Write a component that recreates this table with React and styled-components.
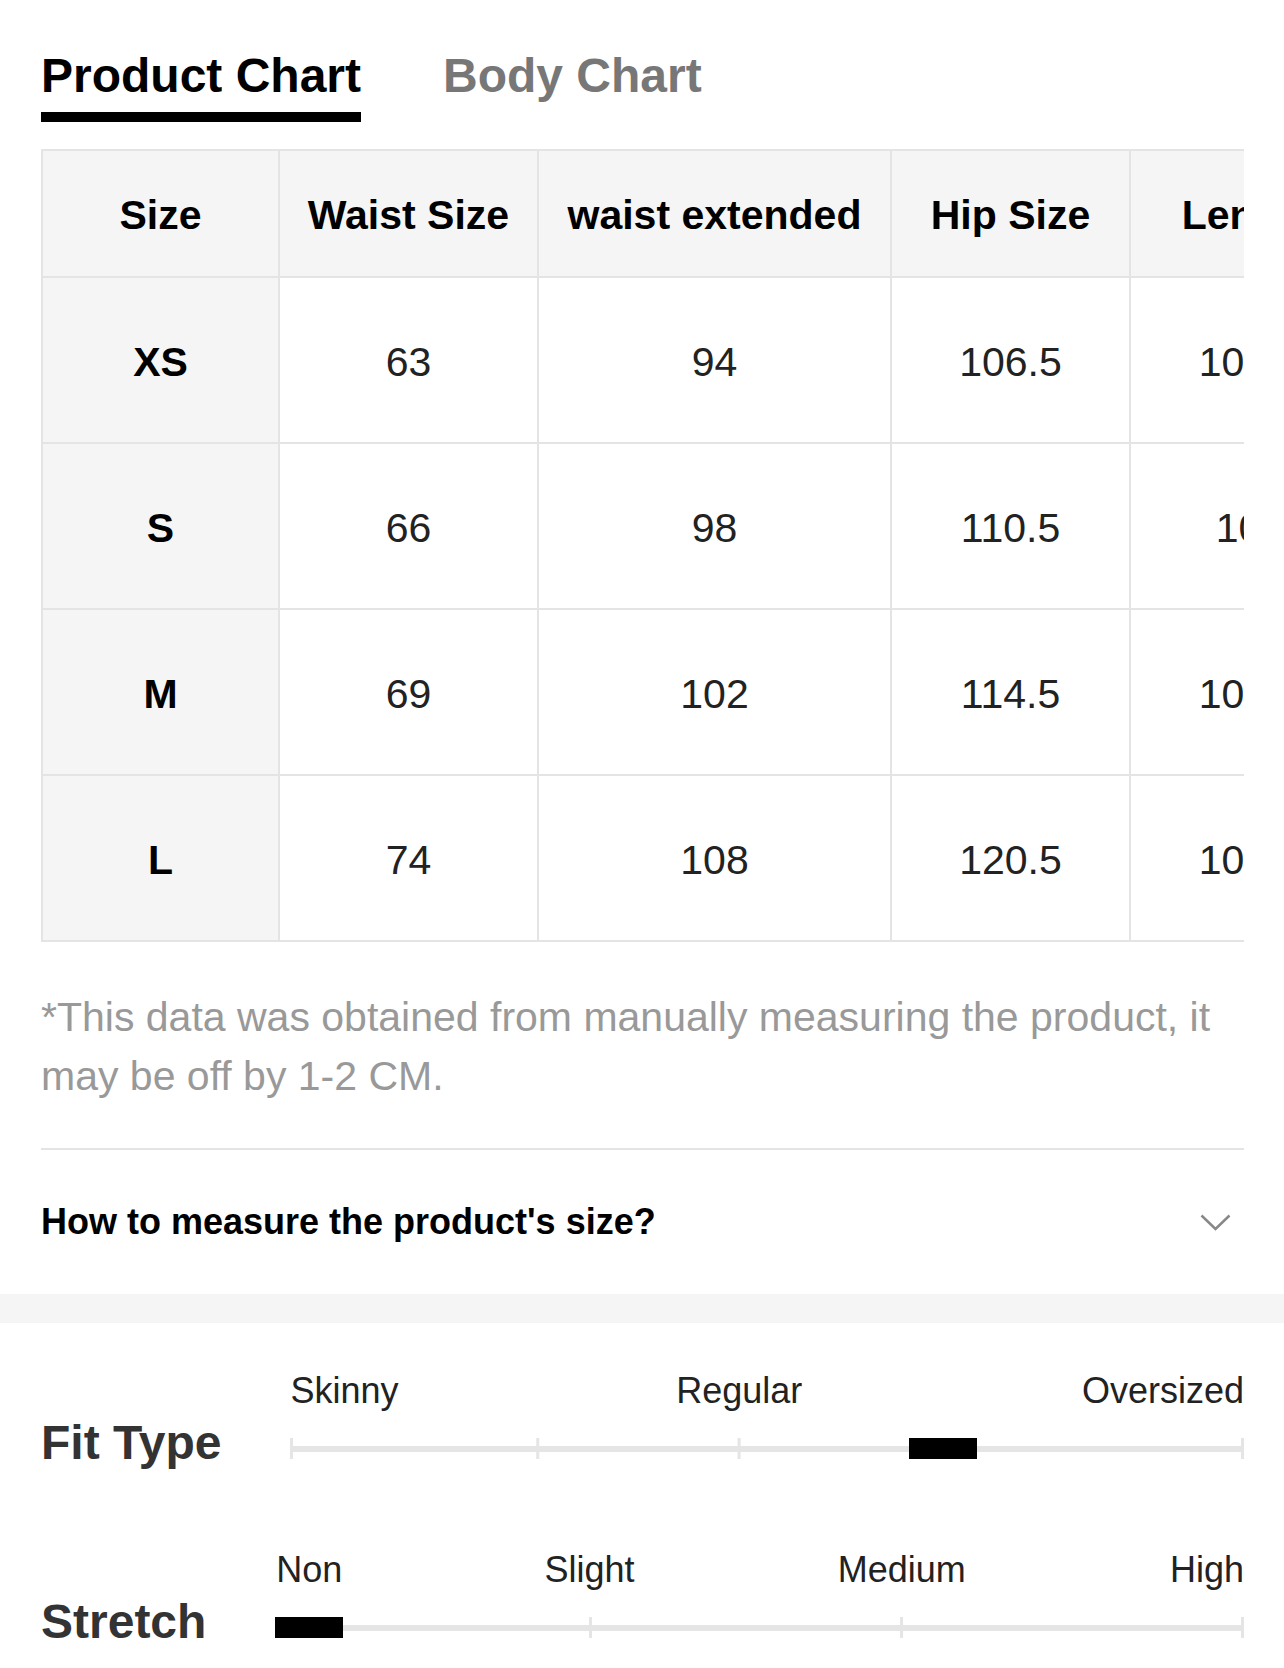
import React from "react";
import styled, { createGlobalStyle } from "styled-components";

const GlobalStyle = createGlobalStyle`
  html, body {
    margin: 0;
    padding: 0;
    background: #fff;
    overflow: hidden;
  }
  body {
    font-family: "Liberation Sans", Arial, Helvetica, sans-serif;
    color: #000;
  }
`;

const Page = styled.div`
  width: 1284px;
  background: #fff;
`;

const Main = styled.div`
  padding: 52px 40px 0 41px;
`;

const Tabs = styled.div`
  display: flex;
  gap: 82px;
`;

const Tab = styled.div`
  font-size: 48px;
  line-height: 48px;
  font-weight: 700;
  padding-bottom: 12px;
  color: ${(p) => (p.$active ? "#000" : "#777")};
  border-bottom: 10px solid ${(p) => (p.$active ? "#000" : "transparent")};
  white-space: nowrap;
`;

const TableWrap = styled.div`
  margin-top: 27px;
  overflow: hidden;
`;

const Grid = styled.div`
  display: grid;
  grid-template-columns: 237px 259px 353px 239px 240px;
  width: max-content;
  border-top: 2px solid #e4e4e4;
  border-left: 2px solid #e4e4e4;
`;

const Cell = styled.div`
  box-sizing: border-box;
  height: ${(p) => (p.$head ? "127px" : "166px")};
  padding-top: 4px;
  border-right: 2px solid #e4e4e4;
  border-bottom: 2px solid #e4e4e4;
  background: ${(p) => (p.$shaded ? "#f5f5f5" : "#fff")};
  display: flex;
  align-items: center;
  justify-content: center;
  font-size: 41px;
  font-weight: ${(p) => (p.$bold ? 700 : 400)};
  color: ${(p) => (p.$bold ? "#000" : "#222")};
  white-space: nowrap;
`;

const Note = styled.p`
  margin: 46px 0 0;
  font-size: 41px;
  line-height: 59px;
  color: #999;
`;

const Divider = styled.div`
  margin-top: 42px;
  height: 2px;
  background: #e4e4e4;
`;

const Faq = styled.div`
  height: 144px;
  display: flex;
  align-items: center;
  justify-content: space-between;
  padding-right: 13px;
`;

const FaqText = styled.span`
  font-size: 36px;
  font-weight: 700;
  color: #000;
`;

const Band = styled.div`
  height: 29px;
  background: #f5f5f5;
`;

const Scales = styled.div`
  padding: 50px 40px 0 41px;
  display: flex;
  flex-direction: column;
  gap: 86px;
`;

const ScaleRow = styled.div`
  display: grid;
  grid-template-columns: auto 1fr;
  column-gap: 69px;
  align-items: end;
`;

const ScaleTitle = styled.div`
  font-size: 48px;
  line-height: 48px;
  font-weight: 700;
  color: #333;
  white-space: nowrap;
  margin-bottom: -1px;
`;

const ScaleBody = styled.div`
  display: flex;
  flex-direction: column;
  gap: 23px;
`;

const Labels = styled.div`
  position: relative;
  height: 36px;
`;

const Label = styled.span`
  position: absolute;
  top: 0;
  font-size: 36px;
  line-height: 36px;
  color: #222;
  white-space: nowrap;
  ${(p) =>
    p.$align === "start"
      ? `left: ${p.$at}%;`
      : p.$align === "end"
      ? `right: ${100 - p.$at}%;`
      : `left: ${p.$at}%; transform: translateX(-50%);`}
`;

const Track = styled.div`
  position: relative;
  height: 34px;

  &::before {
    content: "";
    position: absolute;
    left: 0;
    right: 0;
    top: 14px;
    height: 6px;
    background: #e5e5e5;
  }
`;

const Tick = styled.span`
  position: absolute;
  top: 6px;
  width: 3px;
  height: 21px;
  background: #e5e5e5;
  left: ${(p) => p.$at}%;
  transform: translateX(-${(p) => p.$at}%);
`;

const Marker = styled.span`
  position: absolute;
  top: 6px;
  width: 68px;
  height: 21px;
  background: #000;
  left: ${(p) => p.$at}%;
  transform: translateX(-50%);
`;

const Chevron = () => (
  <svg width="31" height="17" viewBox="0 0 31 17" fill="none">
    <polyline
      points="1.5,1.5 15.5,15 29.5,1.5"
      stroke="#888"
      strokeWidth="2.5"
      fill="none"
    />
  </svg>
);

const headers = ["Size", "Waist Size", "waist extended", "Hip Size", "Length"];
const rows = [
  ["XS", "63", "94", "106.5", "104.5"],
  ["S", "66", "98", "110.5", "105"],
  ["M", "69", "102", "114.5", "105.5"],
  ["L", "74", "108", "120.5", "106.5"],
];

const scales = [
  {
    title: "Fit Type",
    labels: [
      { text: "Skinny", at: 0, align: "start" },
      { text: "Regular", at: 47.06, align: "center" },
      { text: "Oversized", at: 100, align: "end" },
    ],
    ticks: [0, 25.82, 47.06, 100],
    marker: 68.42,
  },
  {
    title: "Stretch",
    labels: [
      { text: "Non", at: 3.51, align: "center" },
      { text: "Slight", at: 32.44, align: "center" },
      { text: "Medium", at: 64.67, align: "center" },
      { text: "High", at: 100, align: "end" },
    ],
    ticks: [0, 32.44, 64.67, 100],
    marker: 3.51,
  },
];

export default function App() {
  return (
    <Page>
      <GlobalStyle />
      <Main>
        <Tabs>
          <Tab $active>Product Chart</Tab>
          <Tab>Body Chart</Tab>
        </Tabs>

        <TableWrap>
          <Grid>
            {headers.map((h) => (
              <Cell key={h} $head $shaded $bold>
                {h}
              </Cell>
            ))}
            {rows.map((r) =>
              r.map((v, i) => (
                <Cell key={r[0] + i} $shaded={i === 0} $bold={i === 0}>
                  {v}
                </Cell>
              ))
            )}
          </Grid>
        </TableWrap>

        <Note>
          *This data was obtained from manually measuring the product, it may
          be off by 1-2 CM.
        </Note>
        <Divider />
        <Faq>
          <FaqText>How to measure the product's size?</FaqText>
          <Chevron />
        </Faq>
      </Main>

      <Band />

      <Scales>
        {scales.map((s) => (
          <ScaleRow key={s.title}>
            <ScaleTitle>{s.title}</ScaleTitle>
            <ScaleBody>
              <Labels>
                {s.labels.map((l) => (
                  <Label key={l.text} $at={l.at} $align={l.align}>
                    {l.text}
                  </Label>
                ))}
              </Labels>
              <Track>
                {s.ticks.map((t) => (
                  <Tick key={t} $at={t} />
                ))}
                <Marker $at={s.marker} />
              </Track>
            </ScaleBody>
          </ScaleRow>
        ))}
      </Scales>
    </Page>
  );
}
